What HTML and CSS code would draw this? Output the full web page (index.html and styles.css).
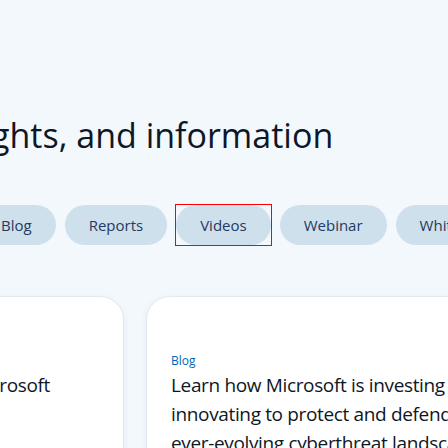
FILE: index.html
```html
<!DOCTYPE html>
<html lang="en">
<head>
<meta charset="utf-8">
<title>Insights</title>
<link rel="stylesheet" href="styles.css">
</head>
<body>
<main class="page">
  <h1 class="headline">ghts, and information</h1>
  <nav class="tabs">
    <span class="tab">Blog</span>
    <span class="tab">Reports</span>
    <span class="tab-wrap"><span class="tab">Videos</span></span>
    <span class="tab">Webinar</span>
    <span class="tab">Whitepapers</span>
  </nav>
  <section class="cards">
    <article class="card card-left">
      <p class="card-label">Blog</p>
      <h2 class="card-title">News from Microsoft</h2>
    </article>
    <article class="card card-right">
      <p class="card-label">Blog</p>
      <h2 class="card-title">Learn how Microsoft is investing and<br>innovating to protect and defend against the<br>ever-evolving cyberthreat landscape.</h2>
    </article>
  </section>
</main>
</body>
</html>
```
FILE: styles.css
```css
html, body {
  margin: 0;
  padding: 0;
  overflow: hidden;
  width: 448px;
  height: 448px;
  background: #f3f8fc;
}
body {
  font-family: "Open Sans", "Noto Sans", sans-serif;
  color: #0e1726;
}
.page {
  display: flex;
  flex-direction: column;
}
.headline {
  margin: 114px 0 0 -9px;
  font-size: 34px;
  line-height: 42px;
  font-weight: 400;
  white-space: nowrap;
  color: #0e1726;
}
.tabs {
  display: flex;
  align-items: center;
  gap: 9px;
  margin: 49px 0 0 -23px;
}
.tab {
  flex: none;
  display: flex;
  align-items: center;
  box-sizing: border-box;
  height: 40px;
  padding: 0 24px;
  border-radius: 20px;
  background: #cfe0ed;
  color: #243a5e;
  font-size: 15px;
  font-weight: 500;
  white-space: nowrap;
}
.tab-wrap {
  flex: none;
  display: flex;
  outline: 1px solid #ff0000;
}
.cards {
  display: flex;
  gap: 22px;
  margin-top: 51px;
}
.card {
  flex: none;
  height: 200px;
  box-sizing: border-box;
  padding: 56px 24px 0;
  background: #ffffff;
  border: 1px solid #e4e9ef;
  border-radius: 24px;
  box-shadow: 0 2px 6px rgba(30, 60, 100, 0.07);
  overflow: hidden;
}
.card-left {
  width: 278px;
  margin-left: -154px;
}
.card-right {
  width: 360px;
}
.card-label {
  margin: 0 0 2px;
  font-size: 12px;
  line-height: 16px;
  color: #0067b8;
}
.card-title {
  margin: 0;
  font-size: 19px;
  line-height: 29px;
  letter-spacing: -0.35px;
  font-weight: 400;
  white-space: nowrap;
  color: #0e1726;
}
```
